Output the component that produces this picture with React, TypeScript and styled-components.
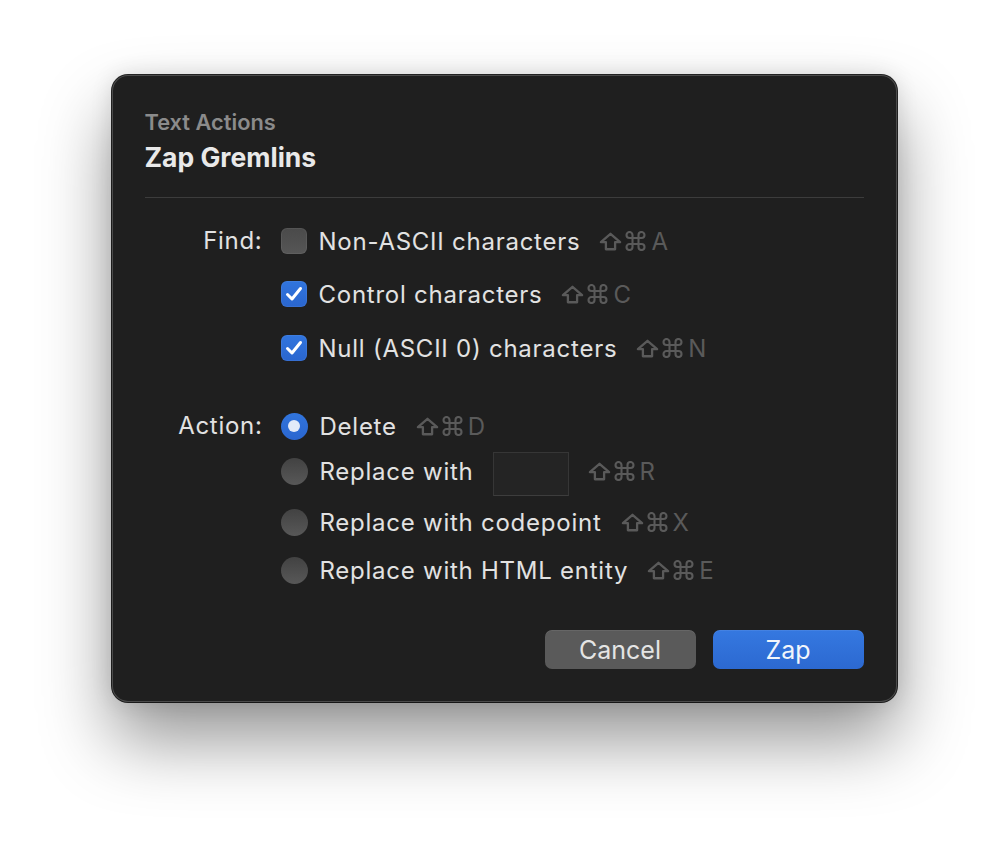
import React from 'react';
import styled, { createGlobalStyle } from 'styled-components';

const GlobalStyle = createGlobalStyle`
  html, body {
    margin: 0;
    padding: 0;
    background: #ffffff;
  }
  body {
    font-family: Inter, 'Noto Sans', 'Liberation Sans', sans-serif;
    -webkit-font-smoothing: antialiased;
  }
`;

const Stage = styled.div`
  width: 1008px;
  height: 850px;
  display: flex;
  justify-content: center;
  align-items: flex-start;
  padding-top: 75px;
  box-sizing: border-box;
`;

const Sheet = styled.div`
  width: 785px;
  box-sizing: border-box;
  padding: 34px 33px 33px 33px;
  background: #1f1f1f;
  border-radius: 16px;
  box-shadow: 0 0 0 1px rgba(0, 0, 0, 0.85),
    inset 0 0 0 1px rgba(255, 255, 255, 0.2),
    0 0 22px rgba(0, 0, 0, 0.12),
    0 38px 70px rgba(0, 0, 0, 0.42);
`;

const Header = styled.header`
  display: flex;
  flex-direction: column;
  gap: 7px;
`;

const Kicker = styled.div`
  font-size: 21.8px;
  line-height: 26px;
  font-weight: 600;
  color: #8b8b8b;
`;

const Title = styled.h1`
  margin: 0;
  font-size: 26.5px;
  line-height: 30px;
  font-weight: 700;
  color: #e9e9e9;
`;

const Divider = styled.hr`
  margin: 25px 0 0;
  border: 0;
  height: 1px;
  background: #3c3c3c;
`;

const Form = styled.div`
  margin-top: 28px;
  display: flex;
  flex-direction: column;
  gap: 48px;
`;

const Section = styled.div`
  display: grid;
  grid-template-columns: 118px 1fr;
  column-gap: 18px;
`;

const Label = styled.div`
  text-align: right;
  font-size: 24px;
  letter-spacing: 0.7px;
  line-height: 30px;
  color: #e2e2e2;
`;

const Options = styled.div`
  display: flex;
  flex-direction: column;
`;

const Row = styled.div<{ $mt?: number }>`
  display: flex;
  align-items: center;
  height: 30px;
  margin-top: ${(p) => p.$mt ?? 0}px;
  font-size: 24px;
  letter-spacing: 0.75px;
  color: #e2e2e2;
`;

const Check = styled.span<{ $on?: boolean }>`
  width: 26px;
  height: 26px;
  box-sizing: border-box;
  border-radius: 6px;
  display: flex;
  align-items: center;
  justify-content: center;
  flex-shrink: 0;
  background: ${(p) =>
    p.$on
      ? 'linear-gradient(#3175de, #2a66cf)'
      : 'linear-gradient(#4a4a4a, #565656)'};
  box-shadow: inset 0 0 0 1px rgba(255, 255, 255, 0.06);
`;

const Radio = styled.span<{ $on?: boolean }>`
  width: 27px;
  height: 27px;
  border-radius: 50%;
  flex-shrink: 0;
  display: flex;
  align-items: center;
  justify-content: center;
  background: ${(p) =>
    p.$on
      ? 'linear-gradient(#3175de, #2a66cf)'
      : 'linear-gradient(#424242, #585858)'};
  &::after {
    content: '';
    display: ${(p) => (p.$on ? 'block' : 'none')};
    width: 12px;
    height: 12px;
    border-radius: 50%;
    background: #e2ebf9;
  }
`;

const OptionText = styled.span`
  margin-left: 12px;
  white-space: nowrap;
`;

const Shortcut = styled.span`
  margin-left: 19px;
  display: inline-flex;
  align-items: center;
  gap: 2px;
  color: #5a5a5a;
  white-space: nowrap;
  letter-spacing: 0;
`;

const Key = styled.span`
  margin-left: 2px;
`;

const SmallField = styled.span`
  width: 76px;
  height: 44px;
  box-sizing: border-box;
  margin: 6px 0 0 19px;
  flex-shrink: 0;
  background: #242424;
  border: 1px solid #363636;
  border-bottom-color: #3d3d3d;
`;

const Footer = styled.div`
  margin-top: 45px;
  display: flex;
  justify-content: flex-end;
  gap: 17px;
`;

const Button = styled.button<{ $primary?: boolean }>`
  width: 151px;
  height: 39px;
  border: 0;
  border-radius: 7px;
  font-family: inherit;
  font-size: 25px;
  color: ${(p) => (p.$primary ? '#f2f5fb' : '#e4e4e4')};
  background: ${(p) =>
    p.$primary ? 'linear-gradient(#3578e0, #2c69d1)' : '#5a5a5a'};
  box-shadow: inset 0 1px 0 rgba(255, 255, 255, 0.08);
  padding: 0;
`;

const CheckMark = () => (
  <svg width="18" height="16" viewBox="0 0 18 16">
    <path
      d="M2.5 8.5 L7 13 L15.5 2.5"
      fill="none"
      stroke="#ffffff"
      strokeWidth="3"
      strokeLinecap="round"
      strokeLinejoin="round"
    />
  </svg>
);

const ShiftGlyph = () => (
  <svg width="23" height="19" viewBox="0 0 22 18">
    <path
      d="M11 1.6 L20.2 9.6 H15.4 V16.4 H6.6 V9.6 H1.8 Z"
      fill="none"
      stroke="currentColor"
      strokeWidth="2.2"
      strokeLinejoin="round"
    />
  </svg>
);

const CommandGlyph = () => (
  <svg width="23" height="20" viewBox="2 2 20 20">
    <path
      d="M15 6v12a3 3 0 1 0 3-3H6a3 3 0 1 0 3 3V6a3 3 0 1 0-3 3h12a3 3 0 1 0-3-3"
      fill="none"
      stroke="currentColor"
      strokeWidth="2.1"
      strokeLinejoin="round"
    />
  </svg>
);

const Keys = ({ letter }: { letter: string }) => (
  <Shortcut>
    <ShiftGlyph />
    <CommandGlyph />
    <Key>{letter}</Key>
  </Shortcut>
);

const findOptions = [
  { label: 'Non-ASCII characters', key: 'A', on: false, mt: 0 },
  { label: 'Control characters', key: 'C', on: true, mt: 23 },
  { label: 'Null (ASCII 0) characters', key: 'N', on: true, mt: 24 },
];

export default function App() {
  return (
    <Stage>
      <GlobalStyle />
      <Sheet>
        <Header>
          <Kicker>Text Actions</Kicker>
          <Title>Zap Gremlins</Title>
        </Header>
        <Divider />
        <Form>
          <Section>
            <Label>Find:</Label>
            <Options>
              {findOptions.map((o) => (
                <Row key={o.key} $mt={o.mt}>
                  <Check $on={o.on}>{o.on && <CheckMark />}</Check>
                  <OptionText>{o.label}</OptionText>
                  <Keys letter={o.key} />
                </Row>
              ))}
            </Options>
          </Section>
          <Section>
            <Label>Action:</Label>
            <Options>
              <Row>
                <Radio $on />
                <OptionText>Delete</OptionText>
                <Keys letter="D" />
              </Row>
              <Row $mt={15}>
                <Radio />
                <OptionText>Replace with</OptionText>
                <SmallField />
                <Keys letter="R" />
              </Row>
              <Row $mt={21}>
                <Radio />
                <OptionText>Replace with codepoint</OptionText>
                <Keys letter="X" />
              </Row>
              <Row $mt={18}>
                <Radio />
                <OptionText>Replace with HTML entity</OptionText>
                <Keys letter="E" />
              </Row>
            </Options>
          </Section>
        </Form>
        <Footer>
          <Button>Cancel</Button>
          <Button $primary>Zap</Button>
        </Footer>
      </Sheet>
    </Stage>
  );
}
